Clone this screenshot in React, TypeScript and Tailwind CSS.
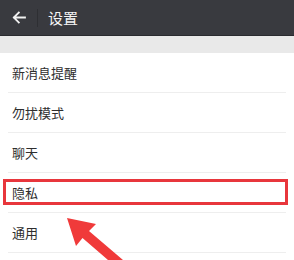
import React from "react";

const items = ["新消息提醒", "勿扰模式", "聊天", "隐私", "通用"];

export default function App() {
  return (
    <div
      className="relative w-[294px] h-[260px] overflow-hidden bg-white"
      style={{ fontFamily: '"Noto Sans CJK SC", "Noto Sans", sans-serif' }}
    >
      <div className="h-[36px] bg-[#393a3f] border-b border-[#2a2b2f] flex items-center">
        <div className="w-[37px] flex items-center justify-center pl-[1px]">
          <svg width="14" height="13" viewBox="0 0 14 13" fill="none">
            <path d="M13 6.5H2M6.8 1.5L1.8 6.5L6.8 11.5" stroke="#f2f2f2" strokeWidth="1.8" strokeLinecap="square" />
          </svg>
        </div>
        <div className="w-px h-[18px] bg-[#2e2f33]" />
        <div className="ml-[10px] text-[15px] leading-none text-[#f4f4f4]">设置</div>
      </div>
      <div className="h-[17px] bg-[#e9e9e9]" />
      <div className="flex flex-col">
        {items.map((t) => (
          <div key={t} className="flex flex-col">
            <div className="h-[39px] flex items-center pl-[12px] text-[13px] text-[#2e2e2e]">{t}</div>
            <div className="mx-[8px] h-px bg-[#eeeeee]" />
          </div>
        ))}
      </div>
      <div className="absolute left-[3px] top-[179px] w-[285px] h-[26px] border-[3px] border-[#e8363c]" />
      <svg className="absolute left-0 top-0" width="294" height="260" viewBox="0 0 294 260">
        <polygon
          points="67,218 96,224 89,231 123,260 108,260 82.5,238 76,246"
          fill="#f03a3a"
        />
      </svg>
    </div>
  );
}
